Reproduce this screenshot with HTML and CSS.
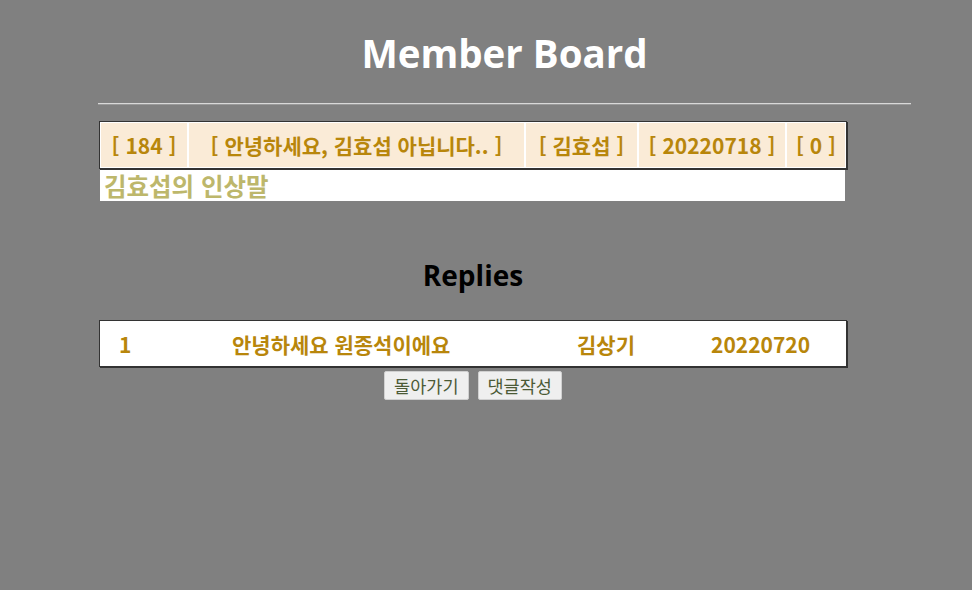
FILE: index.html
```html
<!DOCTYPE html>
<html lang="ko">
<head>
<meta charset="utf-8">
<title>Member Board</title>
<link rel="stylesheet" href="styles.css">
</head>
<body>
<header class="header">
  <h1 class="title">Member Board</h1>
  <hr class="rule">
</header>
<main class="main">
  <table class="post">
    <tr>
      <td class="c1">[ 184 ]</td>
      <td class="c2">[ 안녕하세요, 김효섭 아닙니다.. ]</td>
      <td class="c3">[ 김효섭 ]</td>
      <td class="c4">[ 20220718 ]</td>
      <td class="c5">[ 0 ]</td>
    </tr>
  </table>
  <div class="content">김효섭의 인상말</div>
  <h2 class="replies-title">Replies</h2>
  <table class="replies">
    <tr>
      <td class="r1">1</td>
      <td class="r2">안녕하세요 원종석이에요</td>
      <td class="r3">김상기</td>
      <td class="r4">20220720</td>
    </tr>
  </table>
  <div class="actions">
    <button class="btn" type="button">돌아가기</button>
    <button class="btn" type="button">댓글작성</button>
  </div>
</main>
</body>
</html>
```
FILE: styles.css
```css
html, body {
  margin: 0;
  padding: 0;
  background: #808080;
  font-family: "Open Sans", "Noto Sans CJK KR", sans-serif;
}
.header {
  margin: 0 61px 0 98px;
  padding-top: 27px;
}
.title {
  margin: 0;
  text-align: center;
  color: #ffffff;
  font-size: 38.5px;
  line-height: 52px;
  font-weight: 700;
}
.rule {
  margin: 24px 0 0 0;
  border: 0;
  height: 0;
  border-top: 1px solid #d8d8d8;
  border-bottom: 1px solid #9a9a9a;
}
.main {
  margin-left: 99px;
  width: 748px;
  padding-top: 16px;
}
.post {
  width: 748px;
  border-collapse: separate;
  border-spacing: 0;
  border: 1px solid #333;
  box-shadow: 1px 1px 0 #333;
  background: #ffffff;
  padding: 1px;
}
.post td {
  background: #faebd7;
  color: #b8860b;
  font-family: "Noto Sans CJK KR", sans-serif;
  font-weight: 700;
  font-size: 21px;
  line-height: 26px;
  height: 44px;
  padding: 0;
  text-align: center;
  border-right: 2px solid #ffffff;
}
.post td:last-child { border-right: 0; }
.c1 { width: 86px; }
.c2 { width: 335px; }
.c3 { width: 111px; }
.c4 { width: 146px; }
.content {
  margin: 1px 2px 0 1px;
  background: #ffffff;
  color: #bdb76b;
  font-family: "Noto Sans CJK KR", sans-serif;
  font-weight: 700;
  font-size: 24.5px;
  line-height: 31px;
  padding-left: 4px;
}
.replies-title {
  margin: 54px 0 0 0;
  text-align: center;
  color: #000000;
  font-size: 28px;
  line-height: 40px;
  font-weight: 700;
}
.replies {
  margin-top: 25px;
  width: 748px;
  border-collapse: collapse;
  border: 1px solid #333;
  box-shadow: 1px 1px 0 #333;
  background: #ffffff;
}
.replies td {
  color: #b8860b;
  font-family: "Noto Sans CJK KR", sans-serif;
  font-weight: 700;
  font-size: 21px;
  line-height: 26px;
  height: 45px;
  padding: 0;
}
.r1 { width: 20px; padding-left: 19px !important; }
.r2 { width: 345px; padding-left: 93px !important; }
.r3 { width: 134px; }
.actions {
  display: flex;
  justify-content: center;
  gap: 9px;
  margin-top: 4px;
}
.btn {
  background: #efefef;
  border: 1px solid #d0d0d0;
  border-radius: 2px;
  color: #4b5a36;
  font-family: "Noto Sans CJK KR", sans-serif;
  font-size: 17.5px;
  line-height: 23px;
  padding: 2px 9px;
}
```
